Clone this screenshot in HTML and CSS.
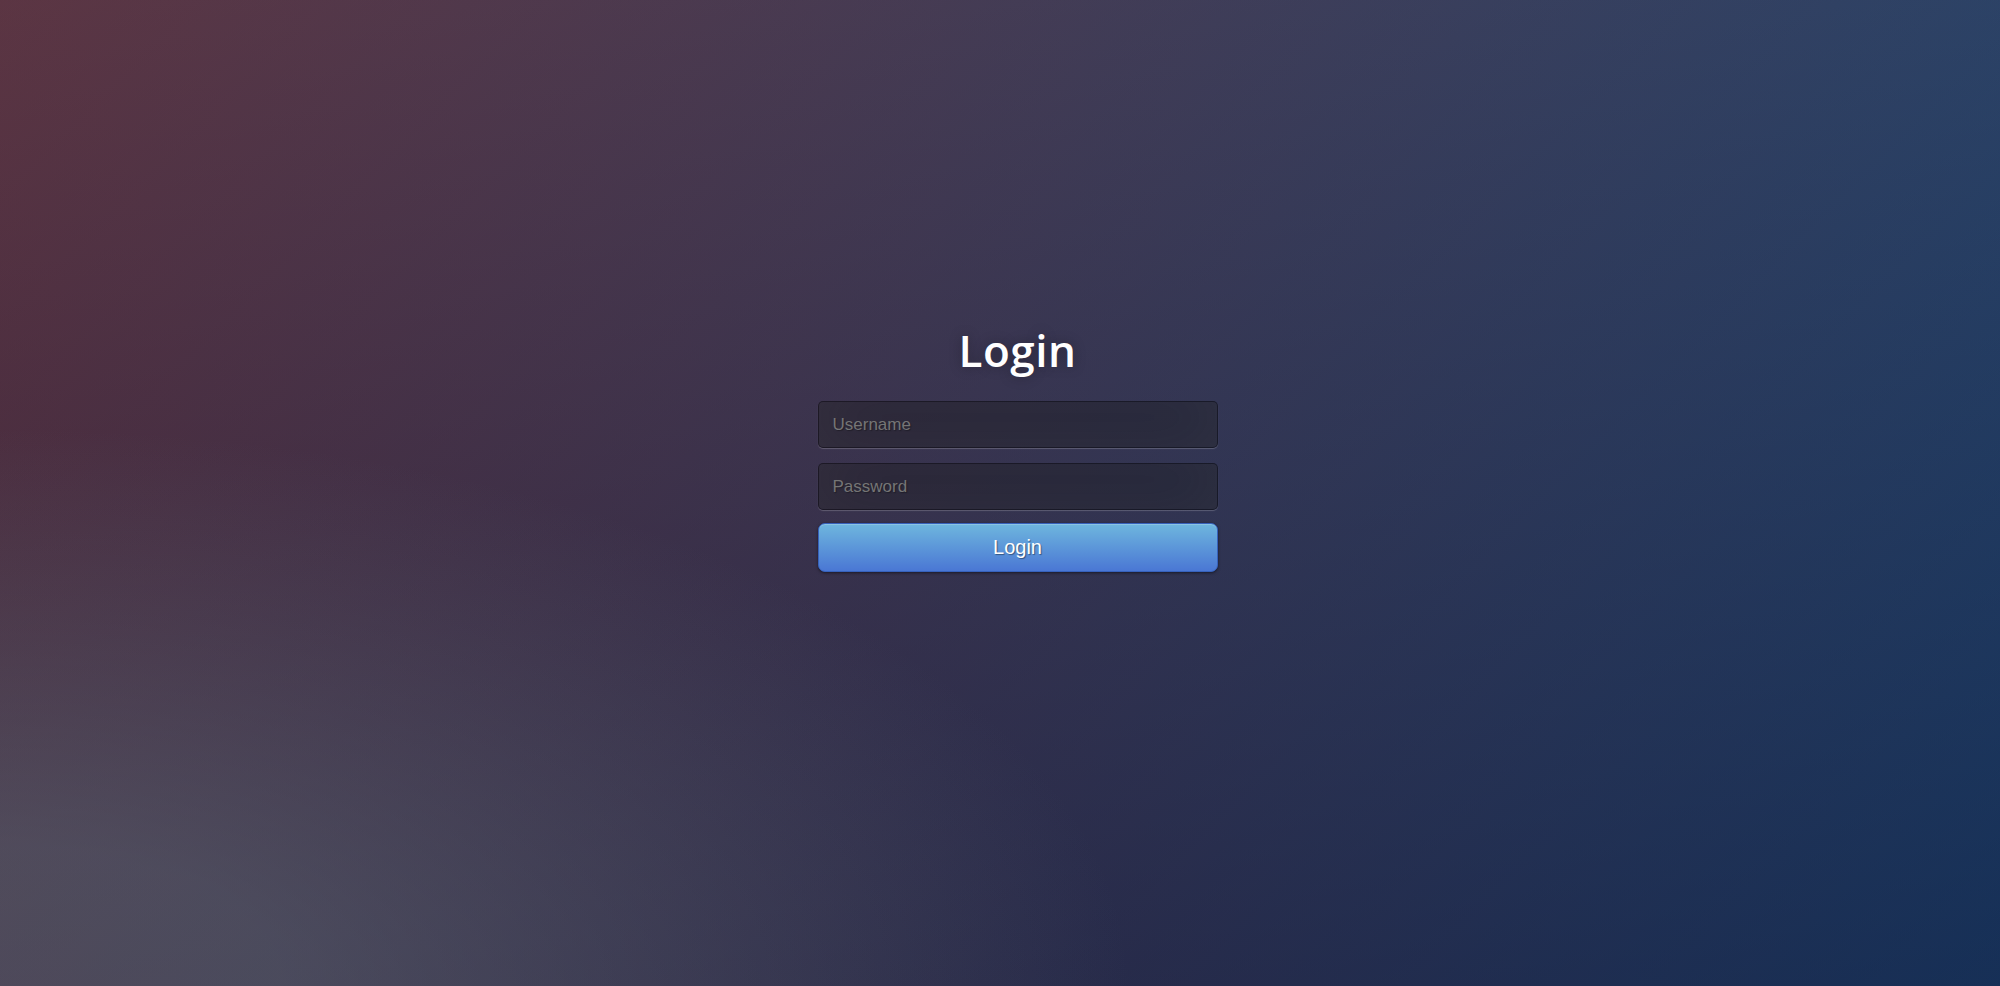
FILE: index.html
```html
<!DOCTYPE html>
<html lang="en">
<head>
<meta charset="utf-8">
<title>Login</title>
<link rel="stylesheet" href="styles.css">
</head>
<body>
<div class="login">
  <h1 class="login-title">Login</h1>
  <form class="login-form">
    <input class="field" type="text" name="u" placeholder="Username">
    <input class="field" type="password" name="p" placeholder="Password">
    <button class="btn" type="submit">Login</button>
  </form>
</div>
</body>
</html>
```

FILE: styles.css
```css
html, body {
  margin: 0;
  width: 100%;
  height: 100%;
}
body {
  font-family: "Open Sans", sans-serif;
  background: #092756;
  background:
    radial-gradient(ellipse farthest-corner at 0% 100%, rgba(104,128,138,.4) 10%, rgba(138,114,76,0) 40%),
    linear-gradient(to bottom, rgba(57,173,219,.25) 0%, rgba(42,60,87,.4) 100%),
    linear-gradient(135deg, #670d10 0%, #092756 100%);
  display: flex;
  justify-content: center;
  align-items: flex-start;
  box-sizing: border-box;
  padding-top: 321px;
}
.login {
  width: 400px;
  margin-left: 35px;
  display: flex;
  flex-direction: column;
}
.login-title {
  margin: 0 0 22px;
  color: #fff;
  font-family: "Open Sans", sans-serif;
  font-weight: 600;
  font-size: 44px;
  line-height: 58px;
  letter-spacing: 0.5px;
  text-align: center;
  text-shadow: 0 0 13px rgba(0,0,0,0.3);
}
.login-form {
  display: flex;
  flex-direction: column;
}
.field {
  box-sizing: border-box;
  width: 100%;
  height: 47px;
  margin: 0 0 15px;
  padding: 0 14px;
  background: rgba(0,0,0,0.3);
  border: 1px solid rgba(0,0,0,0.3);
  border-radius: 5px;
  outline: none;
  font-family: "Liberation Sans", Arial, sans-serif;
  font-size: 17px;
  color: #fff;
  text-shadow: 1px 1px 1px rgba(0,0,0,0.3);
  box-shadow: inset 0 -7px 60px rgba(100,100,100,0.2), 0 1px 1px rgba(255,255,255,0.2);
}
.field + .field {
  margin-bottom: 13px;
}
.field::placeholder {
  color: #757575;
}
.btn {
  box-sizing: border-box;
  width: 100%;
  height: 49px;
  padding: 0 18px;
  font-family: "Liberation Sans", Arial, sans-serif;
  font-size: 20px;
  color: #fff;
  text-align: center;
  text-shadow: 1px 1px 1px rgba(0,0,0,0.4);
  background-color: #4a77d4;
  background-image: linear-gradient(to bottom, #6eb6de, #4a77d4);
  border: 1px solid #3762bc;
  border-radius: 7px;
  box-shadow: inset 0 1px 0 rgba(255,255,255,0.2), 0 1px 3px rgba(0,0,0,0.5);
  cursor: pointer;
}
```
